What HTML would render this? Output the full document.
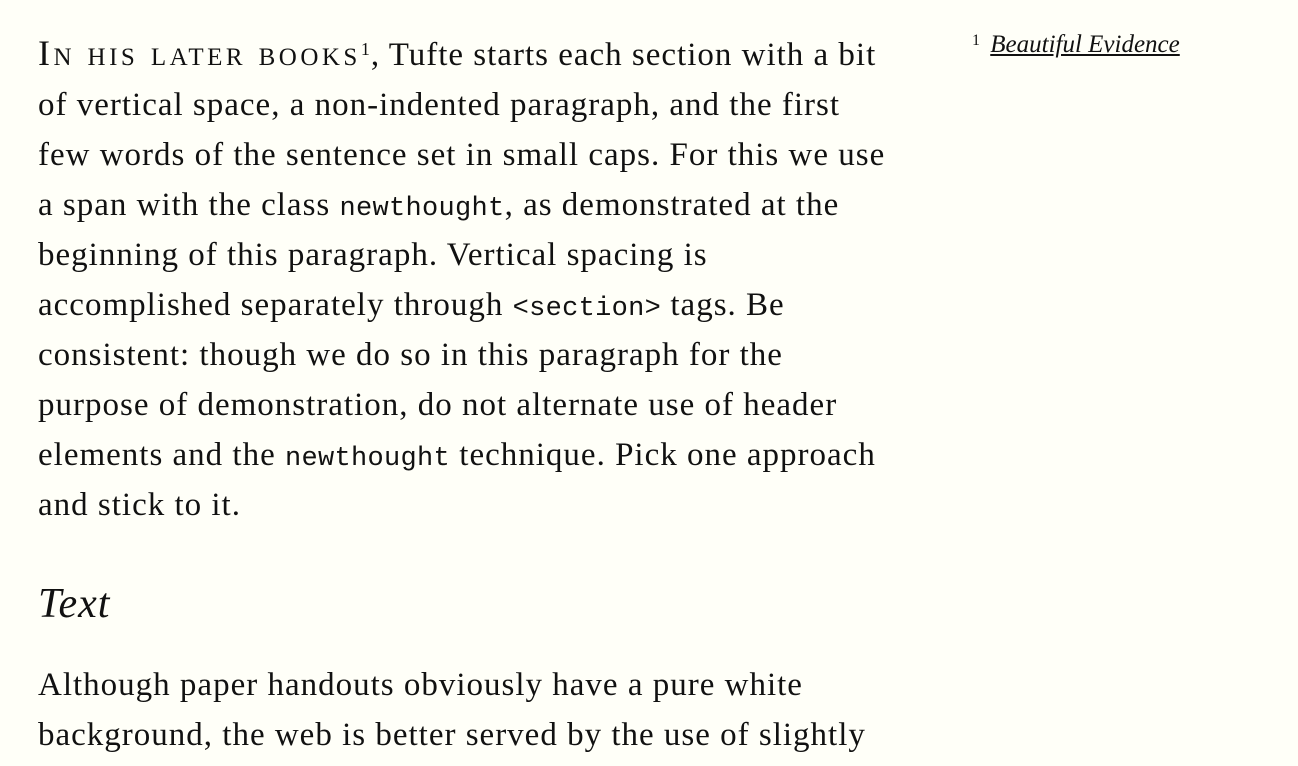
<!DOCTYPE html>
<html><head><meta charset="utf-8"><style>
html,body{margin:0;padding:0;background:#fffff8;}
body{width:1298px;height:766px;overflow:hidden;position:relative;color:#111;font-family:"Liberation Serif",serif;}
.p{position:absolute;left:38px;font-size:33px;letter-spacing:1px;line-height:50px;white-space:nowrap;}
.p div{height:50px;}
code{font-family:"Liberation Mono",monospace;font-size:27px;letter-spacing:0.3px;}
.sc{font-variant:small-caps;font-size:36px;letter-spacing:3.5px;line-height:40px;}
sup{font-size:18px;vertical-align:top;position:relative;top:-6px;}
.h{position:absolute;left:38px;top:579px;font-size:42px;letter-spacing:1px;font-style:italic;line-height:50px;}
.side{position:absolute;left:972px;top:28px;font-size:25px;line-height:34px;white-space:nowrap;}
.side a{color:#111;font-style:italic;text-decoration:underline;}
.side sup{font-size:16px;top:-4px;margin-right:4px;}
</style></head><body>
<div class="p" style="top:30px">
<div><span class="sc">In his later books</span><sup>1</sup>, Tufte starts each section with a bit</div>
<div>of vertical space, a non-indented paragraph, and the first</div>
<div>few words of the sentence set in small caps. For this we use</div>
<div>a span with the class <code>newthought</code>, as demonstrated at the</div>
<div>beginning of this paragraph. Vertical spacing is</div>
<div>accomplished separately through <code>&lt;section&gt;</code> tags. Be</div>
<div>consistent: though we do so in this paragraph for the</div>
<div>purpose of demonstration, do not alternate use of header</div>
<div>elements and the <code>newthought</code> technique. Pick one approach</div>
<div>and stick to it.</div>
</div>
<div class="h">Text</div>
<div class="p" style="top:660px">
<div>Although paper handouts obviously have a pure white</div>
<div>background, the web is better served by the use of slightly</div>
</div>
<div class="side"><sup>1</sup> <a>Beautiful Evidence</a></div>
</body></html>
